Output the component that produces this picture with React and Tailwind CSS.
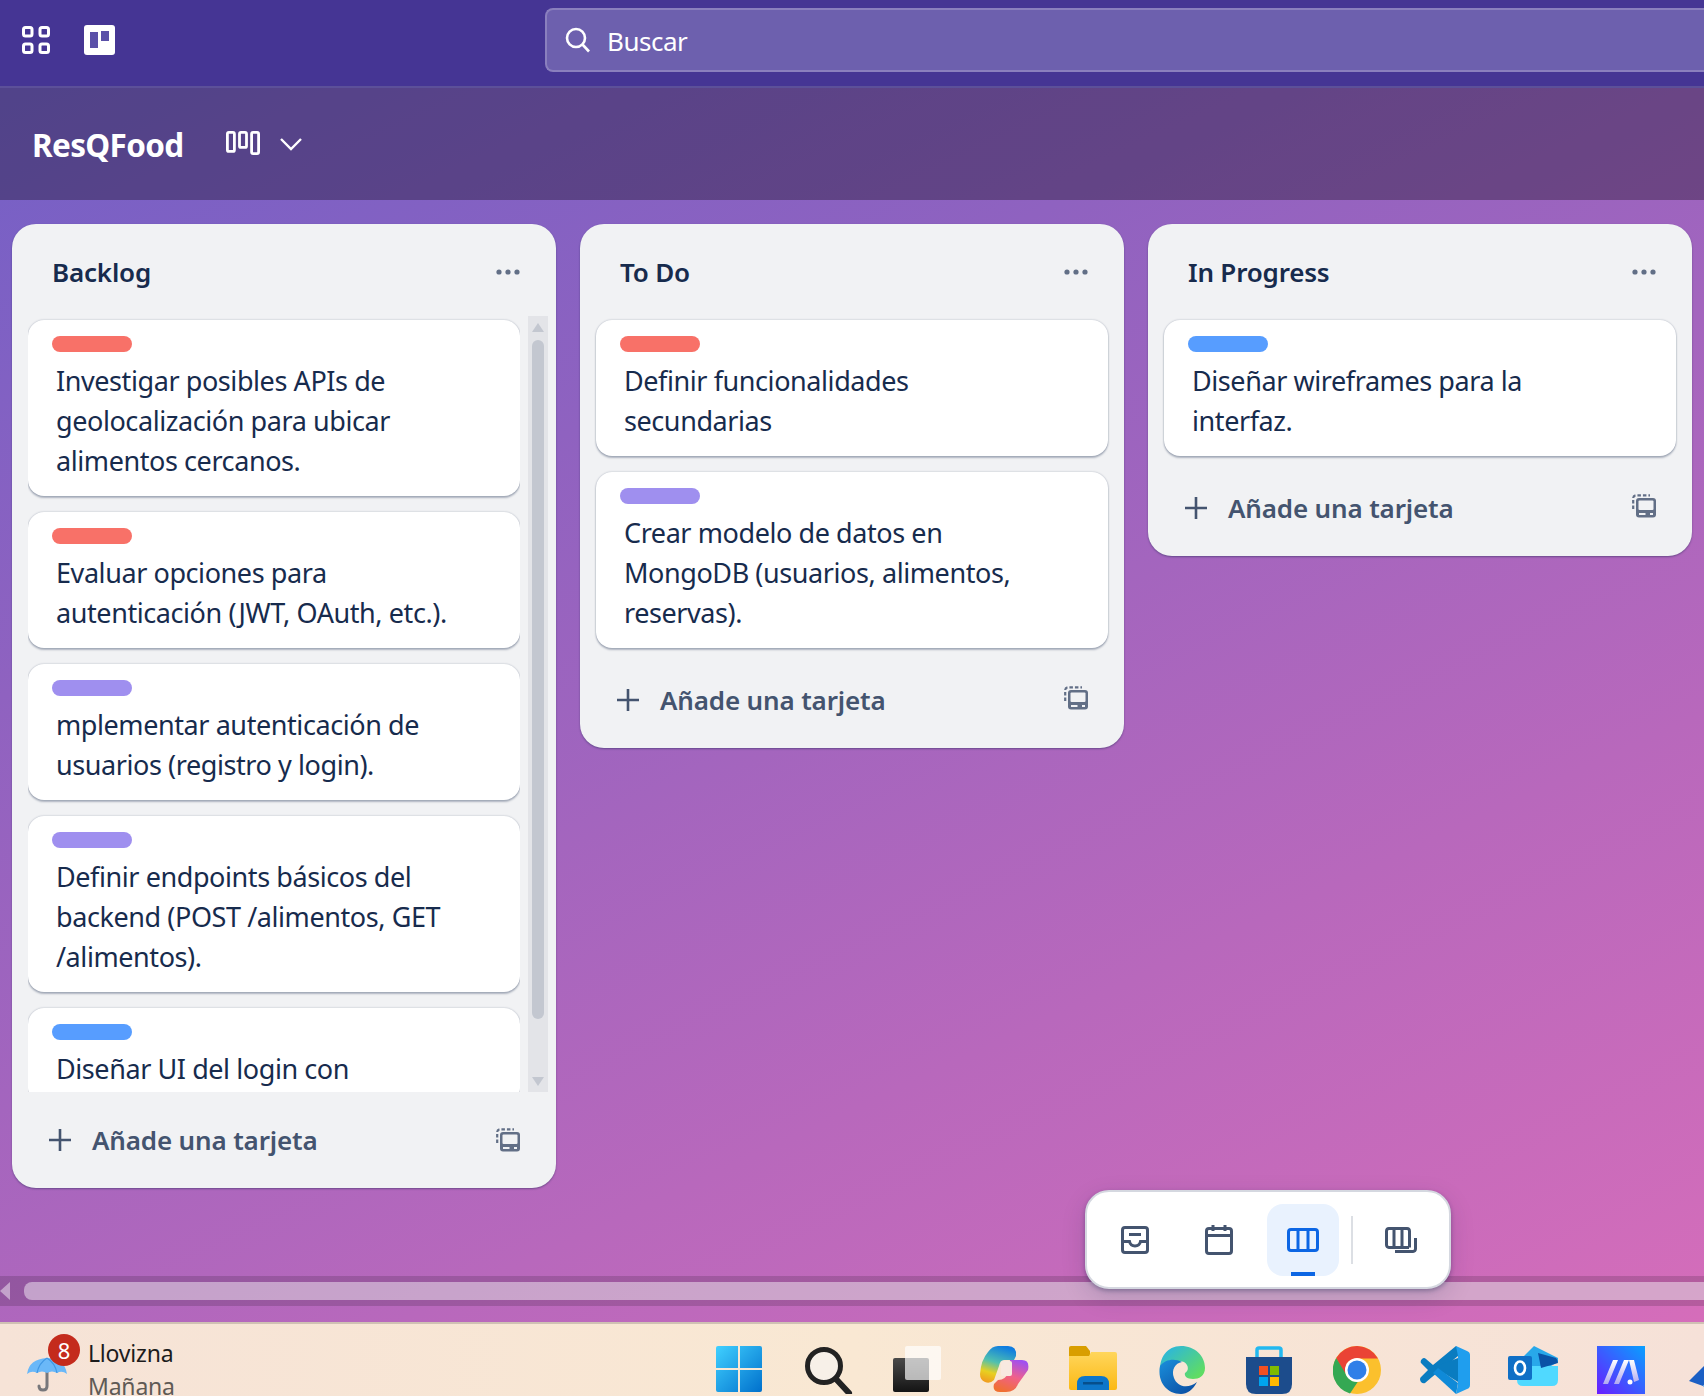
import React from "react";

const RED = "bg-[#f87168]", PUR = "bg-[#9f8fef]", BLUE = "bg-[#579dff]";

function Card({ label, lines }) {
  return (
    <div className="shrink-0 rounded-[16px] bg-white pt-4 pb-[15px] shadow-[0_2px_2px_rgba(9,30,66,0.28),0_0_2px_rgba(9,30,66,0.3)]">
      <div className={`ml-6 h-4 w-20 rounded-lg ${label}`} />
      <div className="mt-[9px] ml-7 text-[27px] leading-[40px] tracking-[-0.42px] text-[#172b4d]">
        {lines.map((l) => (
          <div key={l} className="whitespace-nowrap">{l}</div>
        ))}
      </div>
    </div>
  );
}

function Dots() {
  return (
    <svg width="24" height="6" viewBox="0 0 24 6" className="shrink-0" fill="#626f86">
      <circle cx="3" cy="3" r="2.6" /><circle cx="12" cy="3" r="2.6" /><circle cx="21" cy="3" r="2.6" />
    </svg>
  );
}

function TemplateIcon() {
  return (
    <svg width="24" height="24" viewBox="0 0 24 24" fill="none" className="block">
      <path d="M1.200 15V4.500A3 3 0 0 1 4.500 1.300H18" stroke="#626f86" strokeWidth="2.200" strokeDasharray="3.500 2" />
      <rect x="4" y="4" width="20" height="19.500" rx="3" fill="#626f86" />
      <rect x="6.500" y="6.500" width="15" height="9.500" rx="1" fill="#f1f2f4" />
      <rect x="7" y="19" width="6.500" height="2" fill="#f1f2f4" />
      <rect x="18" y="19" width="3" height="2" fill="#f1f2f4" />
    </svg>
  );
}

function Footer({ tall }) {
  return (
    <div className={`flex items-center pl-[36px] pr-[36px] ${tall ? "h-[100px] pt-1" : "h-[96px]"}`}>
      <svg width="24" height="24" viewBox="0 0 24 24" className="shrink-0" stroke="#44546f" strokeWidth="2.600">
        <path d="M12 1V23M1 12H23" />
      </svg>
      <span className="ml-5 text-[26px] font-semibold tracking-[-0.15px] text-[#44546f]">Añade una tarjeta</span>
      <span className={`ml-auto ${tall ? "-mt-[5px]" : "-mt-[1px]"}`}><TemplateIcon /></span>
    </div>
  );
}

function Column({ title, children }) {
  return (
    <div className="flex w-[544px] shrink-0 flex-col rounded-[24px] bg-[#f1f2f4] shadow-[0_1px_2px_rgba(9,30,66,0.4)]">
      <div className="flex h-[92px] items-center justify-between pl-[40px] pr-[36px]">
        <span className="mt-[4px] text-[26px] font-semibold tracking-[-0.2px] text-[#172b4d]">{title}</span>
        <span className="mt-[4px] flex"><Dots /></span>
      </div>
      {children}
    </div>
  );
}

function ScrollBar() {
  return (
    <div className="relative h-full w-5 shrink-0 bg-[#e3e4e8]">
      <svg width="12" height="9" viewBox="0 0 12 9" className="absolute top-[7px] left-1" fill="#c3c7d0"><path d="M6 0L12 9H0Z" /></svg>
      <div className="absolute top-6 left-1 h-[679px] w-3 rounded-md bg-[#c3c7d0]" />
      <svg width="12" height="9" viewBox="0 0 12 9" className="absolute bottom-[6px] left-1" fill="#c3c7d0"><path d="M6 9L0 0H12Z" /></svg>
    </div>
  );
}

function ColumnsBoard() {
  return (
    <div className="flex flex-1 items-start gap-6 pt-6 pl-3">
      <Column title="Backlog">
        <div className="flex h-[776px] overflow-hidden">
          <div className="ml-4 flex w-[492px] shrink-0 flex-col gap-4 overflow-hidden pt-1">
            <Card label={RED} lines={["Investigar posibles APIs de", "geolocalización para ubicar", "alimentos cercanos."]} />
            <Card label={RED} lines={["Evaluar opciones para", "autenticación (JWT, OAuth, etc.)."]} />
            <Card label={PUR} lines={["mplementar autenticación de", "usuarios (registro y login)."]} />
            <Card label={PUR} lines={["Definir endpoints básicos del", "backend (POST /alimentos, GET", "/alimentos)."]} />
            <Card label={BLUE} lines={["Diseñar UI del login con"]} />
          </div>
          <div className="ml-2"><ScrollBar /></div>
        </div>
        <Footer />
      </Column>
      <Column title="To Do">
        <div className="flex flex-col gap-4 px-4 pt-1">
          <Card label={RED} lines={["Definir funcionalidades", "secundarias"]} />
          <Card label={PUR} lines={["Crear modelo de datos en", "MongoDB (usuarios, alimentos,", "reservas)."]} />
        </div>
        <Footer tall />
      </Column>
      <Column title="In Progress">
        <div className="flex flex-col gap-4 px-4 pt-1">
          <Card label={BLUE} lines={["Diseñar wireframes para la", "interfaz."]} />
        </div>
        <Footer tall />
      </Column>
    </div>
  );
}

function ViewSwitcher() {
  const s = { fill: "none", stroke: "#44546f", strokeWidth: 3 };
  return (
    <div className="absolute top-[1190px] left-[1085px] flex h-[99px] w-[366px] items-center rounded-[24px] border-2 border-[#d5d8e0] bg-white pl-[12px] shadow-[0_2px_4px_rgba(9,30,66,0.3),0_8px_24px_rgba(9,30,66,0.15)]">
      <div className="flex h-[72px] w-[72px] items-center justify-center">
        <svg width="28" height="28" viewBox="0 0 28 28" {...s}>
          <rect x="1.500" y="1.500" width="25" height="25" rx="2.500" />
          <path d="M1.500 15.500H8.500Q9.500 20 14 20T19.500 15.500H26.500M8 8.500H20" />
        </svg>
      </div>
      <div className="ml-[12px] flex h-[72px] w-[72px] items-center justify-center">
        <svg width="28" height="30" viewBox="0 0 28 30" {...s}>
          <rect x="1.500" y="3.500" width="25" height="25" rx="2.500" />
          <path d="M1.500 10.500H26.500M8 0V6M20 0V6" />
        </svg>
      </div>
      <div className="relative ml-[12px] flex h-[72px] w-[72px] items-center justify-center rounded-[16px] bg-[#e9f2fe]">
        <svg width="32" height="24" viewBox="0 0 32 24" fill="none" stroke="#0c66e4" strokeWidth="3">
          <rect x="1.500" y="1.500" width="29" height="21" rx="2.500" />
          <path d="M11 1.500V22.500M21 1.500V22.500" />
        </svg>
        <div className="absolute bottom-0 left-6 h-1 w-6 bg-[#0c66e4]" />
      </div>
      <div className="ml-3 h-12 w-0.5 bg-[#dcdfe4]" />
      <div className="ml-8">
        <svg width="32" height="26" viewBox="0 0 32 26" className="block" {...s}>
          <path d="M24 20.500H4A2.700 2.700 0 0 1 1.500 18V4A2.700 2.700 0 0 1 4 1.500H22A2.700 2.700 0 0 1 24.500 4V20.500M9 1.500V20.500M17 1.500V20.500M10 24.500H28A2.700 2.700 0 0 0 30.500 22V11" />
        </svg>
      </div>
    </div>
  );
}

function WinLogo() {
  return (
    <svg width="46" height="46" viewBox="0 0 46 46">
      <defs>
        <linearGradient id="win" x1="0" y1="0" x2="1" y2="1">
          <stop offset="0" stopColor="#40d0ff" /><stop offset="1" stopColor="#0070cc" />
        </linearGradient>
      </defs>
      <path fill="url(#win)" d="M2 0H22V22H0V2A2 2 0 0 1 2 0ZM24 0H44A2 2 0 0 1 46 2V22H24ZM0 24H22V46H2A2 2 0 0 1 0 44ZM24 24H46V44A2 2 0 0 1 44 46H24Z" />
    </svg>
  );
}
function Glass() {
  return (
    <svg width="48" height="48" viewBox="0 0 48 48" className="ml-1" fill="#f7f0e8" stroke="#222" >
      <circle cx="19" cy="20" r="16.500" strokeWidth="5" />
      <path d="M31 33L44 47" strokeWidth="6" strokeLinecap="round" />
    </svg>
  );
}
function TaskView() {
  return (
    <svg width="48" height="46" viewBox="0 0 48 46">
      <defs>
        <linearGradient id="tv" x1="0" y1="0" x2="0" y2="1"><stop offset="0" stopColor="#4a4a4a" /><stop offset="1" stopColor="#141414" /></linearGradient>
      </defs>
      <rect x="0" y="12" width="36" height="34" rx="2" fill="url(#tv)" />
      <rect x="12" y="0" width="36" height="34" rx="2" fill="#fff" fillOpacity="0.68" />
    </svg>
  );
}
function Copilot() {
  return (
    <svg width="50" height="46" viewBox="0 0 50 46" >
      <defs>
        <linearGradient id="cpa" x1="0.6" y1="0" x2="0.3" y2="1"><stop offset="0" stopColor="#0f7ce0" /><stop offset="0.45" stopColor="#4fc0b0" /><stop offset="0.75" stopColor="#e8d020" /><stop offset="1" stopColor="#f0a020" /></linearGradient>
        <linearGradient id="cpb" x1="0.7" y1="0" x2="0.3" y2="1"><stop offset="0" stopColor="#a050f0" /><stop offset="0.5" stopColor="#f0608a" /><stop offset="1" stopColor="#f07030" /></linearGradient>
      </defs>
      <path fill="url(#cpb)" d="M30 14H42Q50 14 48 24L38 38Q35 46 26 46H20Q12 46 14 38L18 34Q26 34 28 26Z" />
      <path fill="url(#cpa)" d="M18 0H28Q37 0 36 10L34 14H24Q20 14 19 20L14 34Q10 38 5 36Q0 34 0 28Q1 14 8 6Q12 0 18 0Z" />
      <rect x="21" y="15" width="11" height="15" rx="2" fill="#f8e9e0" />
    </svg>
  );
}
function Folder() {
  return (
    <svg width="48" height="44" viewBox="0 0 48 44">
      <defs>
        <linearGradient id="fl" x1="0" y1="0" x2="0" y2="1"><stop offset="0" stopColor="#ffd65c" /><stop offset="1" stopColor="#fbb914" /></linearGradient>
      </defs>
      <path fill="#d99e00" d="M2 0H17L21 5V10H0V2A2 2 0 0 1 2 0Z" />
      <path fill="url(#fl)" d="M0 10L20 10L22 6H46A2 2 0 0 1 48 8V42A2 2 0 0 1 46 44H2A2 2 0 0 1 0 42Z" />
      <path fill="#0d76c9" d="M8 44V38Q8 30 16 30H32Q40 30 40 38V44Z" />
      <rect x="14" y="36" width="20" height="2.500" fill="#064f8c" />
    </svg>
  );
}
function Edge() {
  return (
    <svg width="48" height="48" viewBox="0 0 48 48">
      <defs>
        <linearGradient id="eg" x1="0.2" y1="0" x2="1" y2="0.7"><stop offset="0" stopColor="#2cb6dd" /><stop offset="1" stopColor="#5fdc64" /></linearGradient>
        <linearGradient id="eb" x1="0" y1="0" x2="0.8" y2="1"><stop offset="0" stopColor="#1a90dc" /><stop offset="1" stopColor="#0b4fa4" /></linearGradient>
      </defs>
      <path fill="url(#eg)" d="M24 0C38 0 48 10 48 22C48 30 42 33 36 33C30 33 27 30 28 27C32 25 32 19 27 16C20 13 8 16 3 26C2 12 10 0 24 0Z" />
      <path fill="url(#eb)" d="M3 20C8 13 18 12 25 16C18 17 14 24 17 32C20 40 30 44 40 36C36 44 30 48 24 48C10 48 0 36 3 20Z" />
    </svg>
  );
}
function Store() {
  return (
    <svg width="46" height="48" viewBox="0 0 46 48">
      <path d="M11 12V4Q11 2 13 2H33Q35 2 35 4V12" fill="none" stroke="#22b8f0" strokeWidth="3.500" />
      <path fill="#1c4c8c" d="M0 11H46V38Q46 48 36 48H10Q0 48 0 38Z" />
      <rect x="13" y="20" width="9" height="9" fill="#f25022" /><rect x="24" y="20" width="9" height="9" fill="#7fba00" />
      <rect x="13" y="31" width="9" height="9" fill="#00a4ef" /><rect x="24" y="31" width="9" height="9" fill="#ffb900" />
    </svg>
  );
}
function Chrome() {
  return (
    <svg width="48" height="48" viewBox="0 0 48 48">
      <circle cx="24" cy="24" r="24" fill="#fbc02d" />
      <path fill="#ea4335" d="M3.200 12A24 24 0 0 1 45 12.500L24 12.500Q16 13 13 19L12 29Z" />
      <path fill="#34a853" d="M3.200 12L14 30Q18 36 25 35.500L17 47.500A24 24 0 0 1 3.200 12Z" />
      <circle cx="24" cy="24" r="12" fill="#fff" />
      <circle cx="24" cy="24" r="9.500" fill="#2f7fe8" />
    </svg>
  );
}
function VSCode() {
  return (
    <svg width="50" height="48" viewBox="0 0 50 48">
      <path fill="#0a7cc0" d="M36 0L38 2V10L12 31L5 37Q3 38 1 36Q-1 33 1 31L8 24L1 17Q0 15 2 13Q4 11 6 13L13 19Z" />
      <path fill="#0a7cc0" d="M38 12V36L14 21Z" />
      <path fill="#1f9eee" d="M36 0L47 5Q50 6 50 9V39Q50 42 47 43L36 48L38 38V10Z" />
      <path fill="#0f8ad8" d="M36 48L13 27L18 22L38 37Z" />
    </svg>
  );
}
function Outlook() {
  return (
    <svg width="50" height="40" viewBox="0 0 50 40">
      <path fill="#28a8ea" d="M8 18L26 0L50 12V16L22 32Z" />
      <path fill="#50d9ff" d="M9 20H50V34Q50 40 44 40H15Q9 40 9 34Z" />
      <path fill="#0a52a6" d="M30 7L48 12Q50 14 50 17L33 22Z" />
      <rect x="0" y="10" width="24" height="24" rx="2" fill="#0f6fc6" />
      <ellipse cx="12" cy="22" rx="5" ry="6.500" fill="none" stroke="#fff" strokeWidth="2.600" />
    </svg>
  );
}
function MIcon() {
  return (
    <svg width="48" height="48" viewBox="0 0 48 48">
      <defs>
        <linearGradient id="mi" x1="0" y1="1" x2="1" y2="0"><stop offset="0" stopColor="#6a1cff" /><stop offset="1" stopColor="#08a0ff" /></linearGradient>
        <linearGradient id="mw" x1="0" y1="0" x2="0" y2="1"><stop offset="0" stopColor="#ffffff" /><stop offset="1" stopColor="#b0a8f0" /></linearGradient>
      </defs>
      <rect width="48" height="48" fill="url(#mi)" />
      <path fill="url(#mw)" d="M16 14H21L11 38H6ZM27 14H32L22 38H17ZM32 14H37L42 34L37 36Z" />
      <circle cx="33" cy="36" r="2.500" fill="#fff" />
    </svg>
  );
}
function Diamond() {
  return (
    <svg width="40" height="34" viewBox="0 0 40 34" className="mt-[18px]">
      <path fill="#1b5fc4" d="M0 17L15 2L22 9L14 22Z" />
      <path fill="#4aa2ea" d="M14 22L22 9L38 24L28 34H24Z" />
    </svg>
  );
}

function Umbrella() {
  return (
    <svg width="40" height="38" viewBox="0 0 40 38" className="block">
      <path d="M20 12V31Q20 35 16 35T12 31" fill="none" stroke="#77777b" strokeWidth="3" strokeLinecap="round" />
      <path d="M0 19Q2 4 20 3Q38 4 40 19Q35 15 30 18Q25 15 20 18Q15 15 10 18Q5 15 0 19Z" fill="#6ab8f8" />
      <path d="M20 3Q12 8 10 18M20 3Q28 8 30 18" fill="none" stroke="#3f97e4" strokeWidth="1.200" />
    </svg>
  );
}

function Taskbar() {
  const icons = [WinLogo, Glass, TaskView, Copilot, Folder, Edge, Store, Chrome, VSCode, Outlook, MIcon, Diamond];
  return (
    <div className="flex h-[74px] shrink-0 overflow-hidden border-t-2 border-[#cfc1b3] bg-[linear-gradient(90deg,#f6e3d7,#f9e8d3_50%,#f6e1d8)]">
      <div className="relative ml-[27px] w-[668px] shrink-0">
        <div className="absolute top-[31px] left-0"><Umbrella /></div>
        <div className="absolute top-[10px] left-[21px] flex h-[32px] w-[32px] items-center justify-center rounded-full bg-[#c42b1c] text-[22px] text-white">8</div>
        <div className="absolute top-[12px] left-[61px] text-[23px] leading-[34px] tracking-[-0.2px] whitespace-nowrap text-[#1c1c1c]">Llovizna</div>
        <div className="absolute top-[45px] left-[61px] text-[23px] leading-[34px] tracking-[-0.2px] whitespace-nowrap text-[#5f5a55]">Mañana</div>
      </div>
      {icons.map((Ico, i) => (
        <div key={i} className={`flex w-[88px] shrink-0 justify-center pt-[22px] ${i === 2 ? "ml-[2px]" : ""}`}><Ico /></div>
      ))}
    </div>
  );
}

export default function App() {
  return (
    <div className="relative flex h-[1396px] w-[1704px] flex-col overflow-hidden font-['Noto_Sans',sans-serif]">
      <div className="flex h-[86px] shrink-0 items-start bg-[#453594]">
        <svg width="28" height="28" viewBox="0 0 28 28" className="mt-[26px] ml-[22px]" fill="none" stroke="#fff" strokeWidth="3">
          <rect x="1.500" y="1.500" width="8.500" height="8.500" rx="2" /><rect x="18" y="1.500" width="8.500" height="8.500" rx="2" />
          <rect x="1.500" y="18" width="8.500" height="8.500" rx="2" /><rect x="18" y="18" width="8.500" height="8.500" rx="2" />
        </svg>
        <svg width="31" height="30" viewBox="0 0 31 30" className="mt-[25px] ml-[34px]">
          <rect width="31" height="30" rx="3" fill="#fff" />
          <rect x="6" y="7" width="8" height="16" fill="#5a50a8" /><rect x="17" y="6" width="8" height="10" fill="#5a50a8" />
        </svg>
        <div className="mt-2 ml-[430px] flex h-16 flex-1 items-center rounded-l-lg border-2 border-r-0 border-[#8a7fbe] bg-[#6d60ae] pl-[18px]">
          <svg width="26" height="26" viewBox="0 0 26 26" fill="none" stroke="#fff" strokeWidth="2.600">
            <circle cx="11" cy="11" r="9" /><path d="M17.500 17.500L24 24.500" />
          </svg>
          <span className="mt-[3px] ml-[16px] text-[26px] tracking-[-0.5px] text-white">Buscar</span>
        </div>
      </div>
      <div className="flex min-h-0 flex-1 flex-col border-t-2 border-[#5c5099] bg-[linear-gradient(155deg,#7460c6_0%,#8f62c0_30%,#b868bc_70%,#d56dba_100%)]">
        <div className="flex h-[112px] shrink-0 items-center bg-black/30 pt-[2px] pl-[32px]">
          <span className="text-[31.5px] font-bold tracking-[-0.65px] text-white">ResQFood</span>
          <svg width="34" height="24" viewBox="0 0 34 24" className="ml-[42px] -mt-[4px]" fill="none" stroke="#fff" strokeWidth="2.800">
            <rect x="1.400" y="1.400" width="7" height="19" rx="1.500" /><rect x="13.500" y="1.400" width="7" height="15" rx="1.500" /><rect x="25.600" y="1.400" width="7" height="21.200" rx="1.500" />
          </svg>
          <svg width="22" height="14" viewBox="0 0 22 14" className="ml-5 -mt-[2px]" fill="none" stroke="#fff" strokeWidth="2.400"><path d="M1 2L11 12L21 2" /></svg>
        </div>
        <ColumnsBoard />
        <div className="relative mb-4 flex h-[30px] shrink-0 items-center bg-black/15">
          <svg width="10" height="18" viewBox="0 0 10 18" className="shrink-0" fill="#fff" fillOpacity="0.45"><path d="M10 0V18L0 9Z" /></svg>
          <div className="ml-[14px] h-[18px] flex-1 rounded-l-lg bg-white/45" />
        </div>
      </div>
      <Taskbar />
      <ViewSwitcher />
    </div>
  );
}
